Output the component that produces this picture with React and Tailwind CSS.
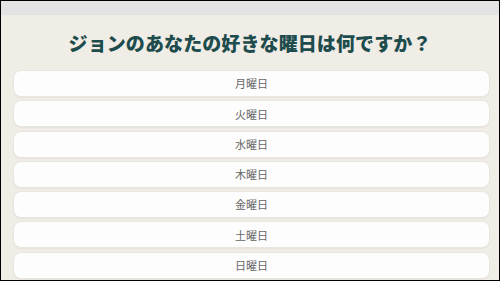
export default function App() {
  const days = ["月曜日", "火曜日", "水曜日", "木曜日", "金曜日", "土曜日", "日曜日"];
  return (
    <div
      className="w-[500px] h-[281px] overflow-hidden border border-black bg-[#efede6] flex flex-col"
      style={{ fontFamily: '"Noto Sans CJK JP", "Noto Sans", sans-serif' }}
    >
      <div className="h-[14px] bg-[#e3e3e3] shrink-0" />
      <h1 className="mt-[14px] h-[27px] flex items-center justify-center text-[19px] font-extrabold text-[#1e4c4d] leading-none tracking-[0.1px]">
        ジョンのあなたの好きな曜日は何ですか？
      </h1>
      <div className="mt-[14px] pl-[12px] pr-[9px] flex flex-col gap-[3.3px]">
        {days.map((d) => (
          <div
            key={d}
            className="h-[27px] shrink-0 rounded-[8px] bg-[#fefdfd] border border-[#e9e6df] shadow-[0_1px_1px_rgba(0,0,0,0.04)] flex items-center justify-center text-[11px] font-normal text-[#666666]"
          >
            {d}
          </div>
        ))}
      </div>
    </div>
  );
}
